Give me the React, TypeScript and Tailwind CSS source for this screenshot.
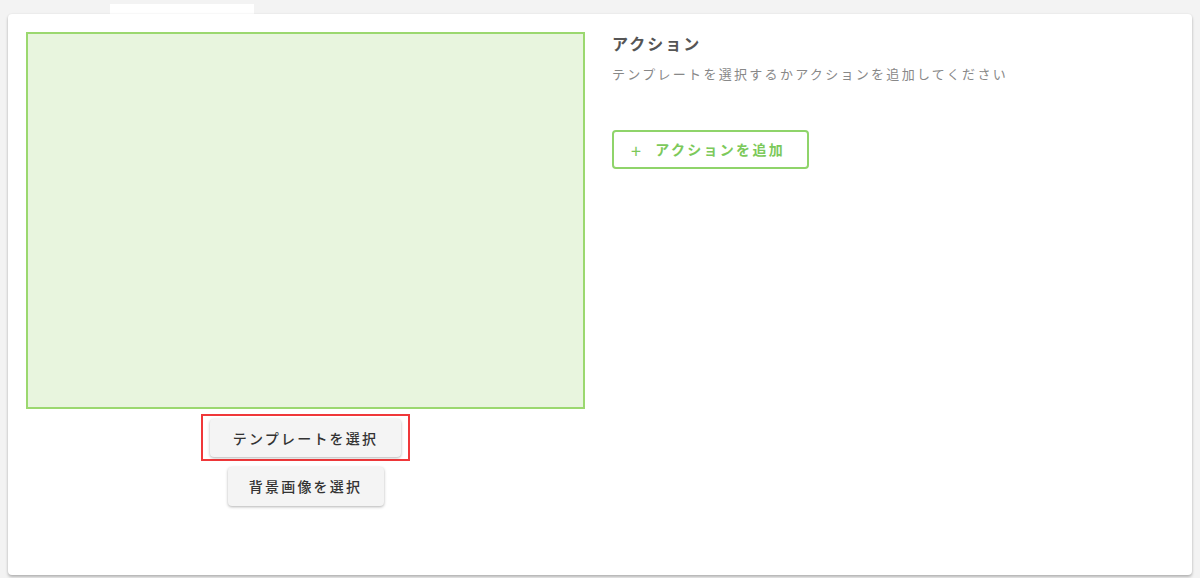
import React from 'react';

const font = { fontFamily: '"Noto Sans CJK JP", "Noto Sans", sans-serif' };

export default function App() {
  return (
    <div className="h-[578px] w-[1200px] bg-[#f3f3f3] px-[8px] pt-[4px] overflow-hidden" style={font}>
      <div className="ml-[102px] w-[144px] h-[10px] bg-white" />
      <div className="h-[561px] bg-white rounded-[4px] shadow-[0_2px_3px_rgba(0,0,0,0.25),0_0_2px_rgba(0,0,0,0.08)] flex pl-[18px] pt-[18px]">
        <div className="w-[559px] flex flex-col items-center">
          <div className="w-full h-[377px] bg-[#e8f5de] border-2 border-[#9bd86f]" />
          <div className="mt-[5px] border-2 border-[#f0383a] px-[7px] pt-[3px] pb-[2px]">
            <button className="w-[191px] h-[38px] rounded-[4px] bg-[#f4f4f4] shadow-[0_1px_3px_rgba(0,0,0,0.3)] text-[14px] font-medium text-[#333] tracking-[2.2px]">
              テンプレートを選択
            </button>
          </div>
          <button className="mt-[6px] w-[156px] h-[39px] rounded-[4px] bg-[#f4f4f4] shadow-[0_1px_3px_rgba(0,0,0,0.3)] text-[14px] font-medium text-[#333] tracking-[2.2px]">
            背景画像を選択
          </button>
        </div>
        <div className="ml-[27px] flex flex-col items-start">
          <h2 className="mt-0 text-[16px] leading-[22px] font-bold text-[#555] tracking-[2px]">アクション</h2>
          <p className="mt-[10px] text-[13px] leading-[20px] text-[#888] tracking-[2.3px]">
            テンプレートを選択するかアクションを追加してください
          </p>
          <button className="mt-[46px] w-[197px] h-[39px] rounded-[4px] border-2 border-[#8fd46a] flex items-center pl-[17px] text-[#7cc95a] text-[14px] font-bold tracking-[2.3px]">
            <span className="text-[18px] font-normal leading-none mr-[12px]">+</span>
            アクションを追加
          </button>
        </div>
      </div>
    </div>
  );
}
